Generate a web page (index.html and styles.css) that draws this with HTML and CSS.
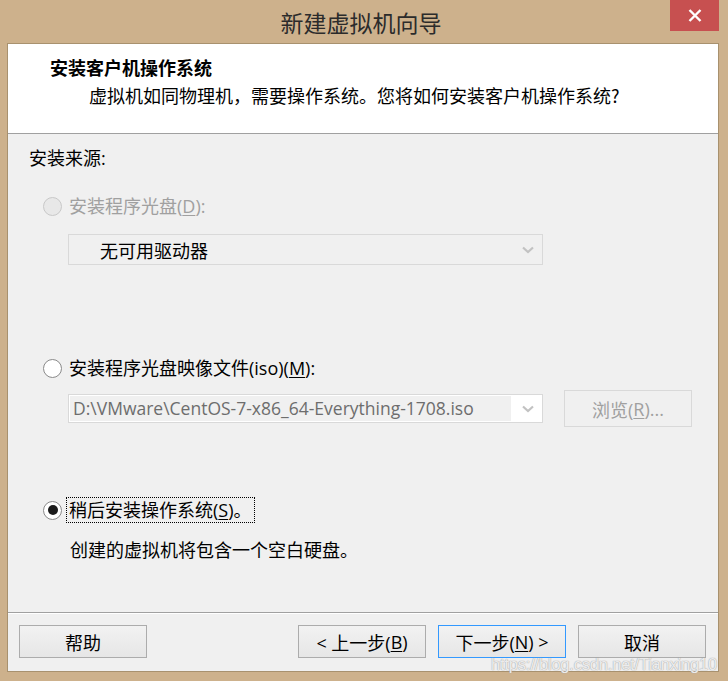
FILE: index.html
```html
<!DOCTYPE html>
<html lang="zh-CN">

<head>
    <meta charset="UTF-8">
    <title>新建虚拟机向导</title>
    <link rel="stylesheet" href="styles.css">
</head>

<body>
    <div class="window">
        <div class="titlebar">
            <span class="title">新建虚拟机向导</span>
            <div class="close">
                <svg width="14" height="13" viewBox="0 0 14 13">
                    <path d="M1.5 1 L12.5 12 M12.5 1 L1.5 12" stroke="#fff" stroke-width="2.4" fill="none"/>
                </svg>
            </div>
        </div>

        <div class="dialog">
            <div class="header">
                <div class="header-title">安装客户机操作系统</div>
                <div class="header-sub">虚拟机如同物理机，需要操作系统。您将如何安装客户机操作系统?</div>
            </div>

            <div class="content">
                <div class="source-label">安装来源:</div>

                <div class="option disabled first">
                    <span class="radio"></span>
                    <span class="label">安装程序光盘(<u>D</u>):</span>
                </div>
                <div class="combo combo-disabled">
                    <span class="combo-text">无可用驱动器</span>
                    <svg class="chevron" width="12" height="8" viewBox="0 0 12 8">
                        <path d="M1 1.5 L6 6 L11 1.5" stroke="#c2c2c2" stroke-width="2.2" fill="none"/>
                    </svg>
                </div>

                <div class="option second">
                    <span class="radio"></span>
                    <span class="label">安装程序光盘映像文件(iso)(<u>M</u>):</span>
                </div>
                <div class="iso-row">
                    <div class="combo combo-iso">
                        <span class="iso-text">D:\VMware\CentOS-7-x86_64-Everything-1708.iso</span>
                        <svg class="chevron" width="12" height="8" viewBox="0 0 12 8">
                            <path d="M1 1.5 L6 6 L11 1.5" stroke="#c2c2c2" stroke-width="2.2" fill="none"/>
                        </svg>
                    </div>
                    <div class="browse">浏览(<u>R</u>)...</div>
                </div>

                <div class="option third">
                    <span class="radio checked"></span>
                    <span class="label focus">稍后安装操作系统(<u>S</u>)。</span>
                </div>
                <div class="desc">创建的虚拟机将包含一个空白硬盘。</div>
            </div>

            <div class="footer">
                <div class="btn">帮助</div>
                <div class="footer-right">
                    <div class="btn">&lt; 上一步(<u>B</u>)</div>
                    <div class="btn btn-default">下一步(<u>N</u>) &gt;</div>
                    <div class="btn">取消</div>
                </div>
            </div>
        </div>

        <div class="watermark">https://blog.csdn.net/Tianxing10</div>
    </div>
</body>

</html>
```
FILE: styles.css
```css
body {
    margin: 0;
    background: #fff;
    font-family: "Open Sans", "Noto Sans CJK SC", sans-serif;
    font-size: 18px;
    color: #000;
}

u {
    text-decoration-thickness: 1px;
    text-underline-offset: 2px;
}

.window {
    position: relative;
    width: 728px;
    height: 681px;
    background: #cdb18c;
    padding: 0 10px 0 7px;
    box-sizing: border-box;
}

.titlebar {
    height: 43px;
    display: flex;
    align-items: center;
    justify-content: center;
}

.title {
    font-family: "Noto Sans CJK SC", sans-serif;
    font-size: 23px;
    color: #2b2b2b;
    margin-left: -3px;
}

.close {
    position: absolute;
    top: 0;
    left: 670px;
    width: 49px;
    height: 31px;
    background: #c75050;
    display: flex;
    align-items: center;
    justify-content: center;
}

.dialog {
    width: 712px;
    height: 629px;
    border: 1px solid #a8916e;
    box-sizing: border-box;
    background: #f0f0f0;
    display: flex;
    flex-direction: column;
}

.header {
    height: 90px;
    background: #fff;
    border-bottom: 1px solid #a0a0a0;
    box-sizing: border-box;
    padding: 11px 0 0 42px;
    font-family: "Noto Sans CJK SC", sans-serif;
}

.header-title {
    font-weight: bold;
    line-height: 24px;
}

.header-sub {
    margin: 4px 0 0 39px;
    line-height: 24px;
}

.content {
    height: 479px;
    padding: 12px 0 0 21px;
    box-sizing: border-box;
    border-bottom: 1px solid #a0a0a0;
}

.source-label {
    line-height: 24px;
}

.option {
    display: flex;
    align-items: center;
    gap: 7px;
    margin-left: 14px;
    line-height: 24px;
}

.option.first {
    margin-top: 24px;
}

.option.second {
    margin-top: 91px;
}

.option.third {
    margin-top: 71px;
}

.option.disabled .label {
    color: #a0a0a0;
}

.radio {
    width: 19px;
    height: 19px;
    border: 1px solid #8a8a8a;
    border-radius: 50%;
    box-sizing: border-box;
    background: #fff;
    display: flex;
    align-items: center;
    justify-content: center;
}

.disabled .radio {
    border-color: #c8c8c8;
    background: #e8e8e8;
}

.radio.checked::after {
    content: "";
    width: 10px;
    height: 10px;
    border-radius: 50%;
    background: #1a1a1a;
}

.label.focus {
    outline: 1px dotted #000;
    outline-offset: 0;
    margin-left: -2px;
    padding: 0 2px;
}

.combo {
    display: flex;
    align-items: center;
    justify-content: space-between;
    width: 475px;
    box-sizing: border-box;
    border: 1px solid #d9d9d9;
}

.combo-disabled {
    height: 31px;
    margin: 16px 0 0 39px;
    padding: 0 8px 0 31px;
    background: #f0f0f0;
}

.combo-text {
    font-family: "Noto Sans CJK SC", sans-serif;
}

.iso-row {
    display: flex;
    align-items: center;
    gap: 21px;
    margin: 10px 0 0 39px;
}

.combo-iso {
    height: 29px;
    background: #fff;
    padding: 1px 8px 1px 1px;
}

.iso-text {
    width: 441px;
    height: 100%;
    background: #f0f0f0;
    color: #6d6d6d;
    padding-left: 3px;
    box-sizing: border-box;
    font-size: 17.5px;
    line-height: 25px;
    white-space: nowrap;
    overflow: hidden;
}

.browse {
    width: 128px;
    height: 37px;
    border: 1px solid #d9d9d9;
    box-sizing: border-box;
    display: flex;
    align-items: center;
    justify-content: center;
    color: #a0a0a0;
}

.desc {
    margin: 16px 0 0 41px;
    line-height: 24px;
}

.footer {
    flex: 1;
    border-top: 1px solid #fff;
    display: flex;
    justify-content: space-between;
    padding: 11px 12px 0 11px;
    box-sizing: border-box;
}

.footer-right {
    display: flex;
    gap: 12px;
}

.btn {
    width: 128px;
    height: 33px;
    border: 1px solid #acacac;
    box-sizing: border-box;
    background: linear-gradient(#f2f2f2, #e6e6e6);
    display: flex;
    align-items: center;
    justify-content: center;
}

.btn-default {
    border-color: #3399ff;
}

.watermark {
    position: absolute;
    right: 11px;
    top: 655px;
    font-family: "Liberation Sans", Arial, sans-serif;
    font-size: 16.5px;
    letter-spacing: -0.2px;
    white-space: nowrap;
    color: rgba(255, 255, 255, 0.8);
    text-shadow: 0 0 1px #a8a8a8, 0 0 1px #a8a8a8;
}
```
